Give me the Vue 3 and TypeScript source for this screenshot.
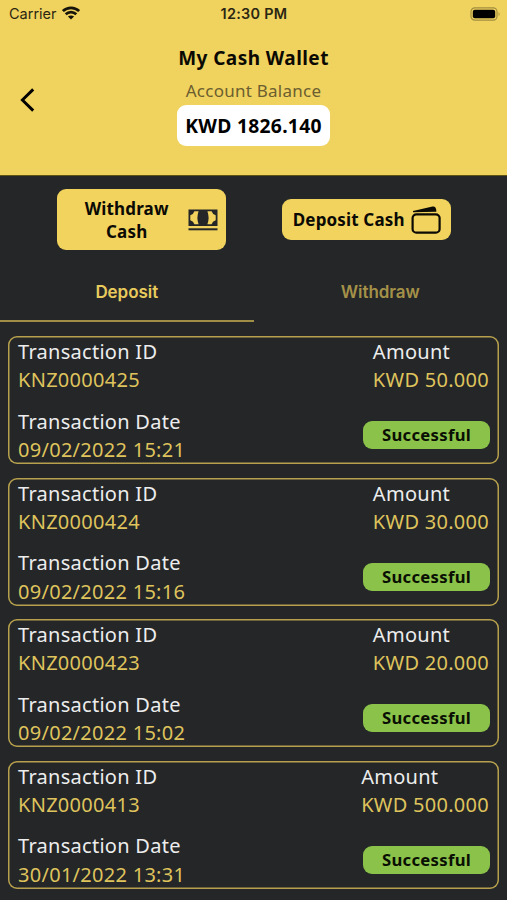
<script setup lang="ts">
interface Transaction {
  id: string
  date: string
  amount: string
}

const transactions: Transaction[] = [
  { id: 'KNZ0000425', date: '09/02/2022 15:21', amount: 'KWD 50.000' },
  { id: 'KNZ0000424', date: '09/02/2022 15:16', amount: 'KWD 30.000' },
  { id: 'KNZ0000423', date: '09/02/2022 15:02', amount: 'KWD 20.000' },
  { id: 'KNZ0000413', date: '30/01/2022 13:31', amount: 'KWD 500.000' },
]
</script>

<template>
  <main class="screen">
    <header class="header">
      <div class="status">
        <div class="carrier">
          <span>Carrier</span>
          <svg class="wifi" viewBox="0 0 18 14" width="18" height="14">
            <path d="M0.9 5.1C5.4 .7 12.6 .7 17.1 5.1M3.7 8.3C6.7 5.4 11.3 5.4 14.3 8.3" fill="none" stroke="#17150b" stroke-width="2.7" />
            <path d="M9 13.4L5.9 10.5C7.6 9 10.4 9 12.1 10.5Z" fill="#17150b" />
          </svg>
        </div>
        <span class="time">12:30 PM</span>
        <svg class="battery" viewBox="0 0 31 14" width="31" height="14">
          <rect x="1" y="0.9" width="26" height="12.2" rx="3.8" fill="none" stroke="#a18d40" stroke-width="1.2" />
          <rect x="2.8" y="2.7" width="22.4" height="8.6" rx="2" fill="#000" />
          <path d="M28.6 4.9Q30.6 7 28.6 9.1Z" fill="#a18d40" />
        </svg>
      </div>
      <div class="bar">
        <button class="back" aria-label="Back">
          <svg viewBox="0 0 16 26" width="16" height="26">
            <path d="M13.2 2.4L2.4 13L13.2 23.6" fill="none" stroke="#000" stroke-width="2.9" />
          </svg>
        </button>
        <div class="summary">
          <h1>My Cash Wallet</h1>
          <p>Account Balance</p>
          <strong>KWD 1826.140</strong>
        </div>
      </div>
    </header>

    <section class="actions">
      <div class="slot">
        <button class="action withdraw">
          <span>Withdraw<br />Cash</span>
          <svg viewBox="0 0 30 22" width="30" height="22">
            <rect x="0.5" y="0.5" width="29" height="16.5" fill="#242628" />
            <path d="M6.4 2.3H10.6Q8.2 8.8 10.6 15.2H6.4Q5.6 12.2 2.3 11.3V6.2Q5.6 5.3 6.4 2.3Z" fill="#f2d35d" />
            <path d="M23.6 2.3H19.4Q21.8 8.8 19.4 15.2H23.6Q24.4 12.2 27.7 11.3V6.2Q24.4 5.3 23.6 2.3Z" fill="#f2d35d" />
            <rect x="0.5" y="19.3" width="29" height="2" fill="#242628" />
          </svg>
        </button>
      </div>
      <div class="slot">
        <button class="action deposit">
          <span>Deposit Cash</span>
          <svg viewBox="0 0 30 28" width="30" height="28">
            <path d="M2 6.2V5L21.5 .5Q24.8 0 25.2 3.8L25.4 5.8Z" fill="#0b0a05" />
            <rect x="1.6" y="8.3" width="27" height="18.4" rx="3.8" fill="none" stroke="#0b0a05" stroke-width="2.2" />
          </svg>
        </button>
      </div>
    </section>

    <nav class="tabs">
      <button class="tab active">Deposit</button>
      <button class="tab">Withdraw</button>
    </nav>

    <section class="list">
      <article v-for="item in transactions" :key="item.id" class="card">
        <div class="details">
          <span class="label">Transaction ID</span>
          <span class="value">{{ item.id }}</span>
          <span class="label second">Transaction Date</span>
          <span class="value">{{ item.date }}</span>
        </div>
        <div class="result">
          <div class="amount">
            <span class="label">Amount</span>
            <span class="value">{{ item.amount }}</span>
          </div>
          <span class="badge">Successful</span>
        </div>
      </article>
    </section>
  </main>
</template>

<style>
body {
  background: #242628;
}
</style>

<style scoped>
.screen {
  width: 507px;
  height: 900px;
  overflow: hidden;
  background: #242628;
  font-family: 'Noto Sans', sans-serif;
  letter-spacing: 0.28px;
}
button {
  margin: 0;
  padding: 0;
  border: 0;
  background: none;
  font: inherit;
  letter-spacing: inherit;
}
.header {
  box-sizing: border-box;
  height: 176px;
  background: #f0d25e;
  border-bottom: 1px solid #5e5313;
}
.status {
  display: grid;
  grid-template-columns: 1fr auto 1fr;
  align-items: center;
  height: 27px;
  padding: 0 6px 0 9px;
  font-family: Inter, sans-serif;
  font-size: 14.5px;
  letter-spacing: 0;
  color: #2b2612;
}
.carrier {
  display: flex;
  align-items: center;
  gap: 6px;
}
.wifi {
  margin: 0 0 2px -1px;
}
.time {
  margin-right: 2px;
  font-weight: 600;
  font-size: 14.4px;
  letter-spacing: 0.3px;
}
.battery {
  justify-self: end;
}
.bar {
  display: grid;
  grid-template-columns: 60px 1fr 60px;
  height: 148px;
}
.back {
  display: flex;
  align-items: center;
  padding: 0 0 2px 20px;
}
.summary {
  display: flex;
  flex-direction: column;
  align-items: center;
  padding-top: 17px;
}
.summary h1 {
  margin: 0;
  font-size: 19px;
  line-height: 28px;
  letter-spacing: 0.45px;
  color: #0b0903;
}
.summary p {
  margin: 5px 0 0;
  font-size: 17px;
  line-height: 27px;
  letter-spacing: 0.25px;
  color: #6b5e30;
}
.summary strong {
  box-sizing: border-box;
  width: 153px;
  height: 41px;
  margin-top: 1px;
  border-radius: 9px;
  background: #fff;
  text-align: center;
  font-size: 19.3px;
  line-height: 41px;
  letter-spacing: 0.28px;
  color: #000;
}
.actions {
  display: grid;
  grid-template-columns: 1fr 1fr;
  height: 87px;
}
.slot {
  display: flex;
  align-items: center;
  justify-content: center;
}
.slot:first-child {
  padding-left: 29px;
}
.slot:last-child {
  padding-right: 28px;
}
.action {
  box-sizing: border-box;
  display: flex;
  align-items: center;
  width: 169px;
  border-radius: 9px;
  background: #f2d35d;
  font-size: 17px;
  font-weight: 700;
  line-height: 23px;
  letter-spacing: 0.15px;
  color: #0b0a05;
}
.withdraw {
  height: 61px;
  justify-content: space-between;
  padding: 0 8px 0 28px;
}
.deposit {
  height: 41px;
  justify-content: space-between;
  padding: 0 10px 0 11px;
}
.tabs {
  display: grid;
  grid-template-columns: 1fr 1fr;
  height: 59px;
}
.tab {
  border-bottom: 2px solid transparent;
  font-family: Inter, sans-serif;
  font-size: 17px;
  font-weight: 600;
  letter-spacing: -0.05px;
  color: #a49148;
}
.tab.active {
  border-color: #a08d46;
  color: #e8cb5c;
}
.list {
  display: flex;
  flex-direction: column;
  gap: 13.5px;
  padding: 14px 8px 0;
}
.card {
  box-sizing: border-box;
  display: flex;
  justify-content: space-between;
  height: 128px;
  padding: 2px 10px 0;
  box-shadow: inset 0 0 0 1.5px #b7a04d;
  border-radius: 9px;
  font-size: 20px;
  line-height: 28.4px;
}
.label,
.value {
  display: block;
}
.label {
  color: #ededed;
}
.value {
  color: #dfc35c;
}
.second {
  margin-top: 13px;
}
.result {
  display: flex;
  flex-direction: column;
  align-items: flex-end;
}
.badge {
  width: 127px;
  height: 28px;
  margin-top: 26.5px;
  margin-right: -1px;
  border-radius: 9px;
  background: #8bc34a;
  text-align: center;
  font-size: 16.7px;
  font-weight: 700;
  line-height: 28px;
  color: #0a0f04;
}
</style>
